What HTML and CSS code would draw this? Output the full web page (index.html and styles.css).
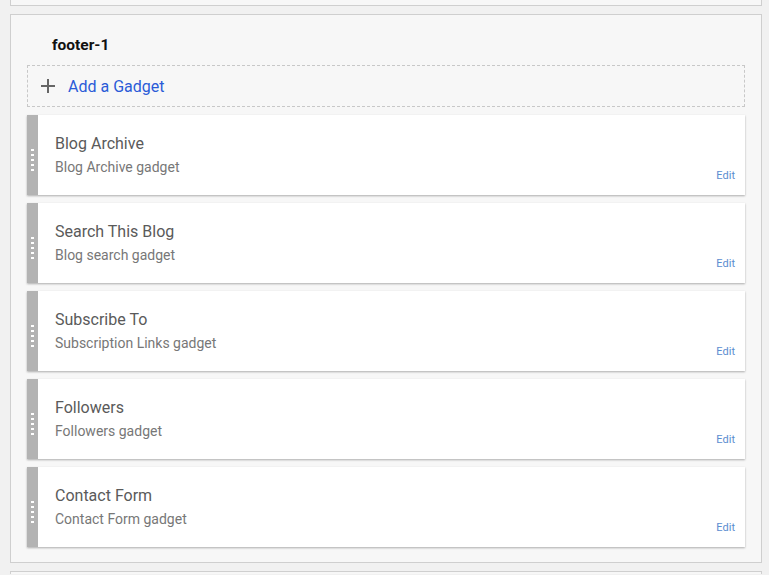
FILE: index.html
```html
<!doctype html>
<html lang="en">

<head>
    <title>Layout</title>
    <link rel="stylesheet" href="styles.css">
</head>

<body>

    <div class="section section-top"></div>

    <div class="section">
        <h3 class="section-title">footer-1</h3>

        <div class="add-gadget">
            <svg class="plus" width="16" height="16" viewBox="0 0 16 16">
                <path d="M8 1v14M1 8h14" stroke="#666" stroke-width="2" fill="none" />
            </svg>
            <span>Add a Gadget</span>
        </div>

        <div class="widget">
            <div class="grip"><span></span><span></span><span></span><span></span><span></span></div>
            <div class="widget-body">
                <div class="widget-title">Blog Archive</div>
                <div class="widget-type">Blog Archive gadget</div>
            </div>
            <a class="edit" href="#">Edit</a>
        </div>

        <div class="widget">
            <div class="grip"><span></span><span></span><span></span><span></span><span></span></div>
            <div class="widget-body">
                <div class="widget-title">Search This Blog</div>
                <div class="widget-type">Blog search gadget</div>
            </div>
            <a class="edit" href="#">Edit</a>
        </div>

        <div class="widget">
            <div class="grip"><span></span><span></span><span></span><span></span><span></span></div>
            <div class="widget-body">
                <div class="widget-title">Subscribe To</div>
                <div class="widget-type">Subscription Links gadget</div>
            </div>
            <a class="edit" href="#">Edit</a>
        </div>

        <div class="widget">
            <div class="grip"><span></span><span></span><span></span><span></span><span></span></div>
            <div class="widget-body">
                <div class="widget-title">Followers</div>
                <div class="widget-type">Followers gadget</div>
            </div>
            <a class="edit" href="#">Edit</a>
        </div>

        <div class="widget">
            <div class="grip"><span></span><span></span><span></span><span></span><span></span></div>
            <div class="widget-body">
                <div class="widget-title">Contact Form</div>
                <div class="widget-type">Contact Form gadget</div>
            </div>
            <a class="edit" href="#">Edit</a>
        </div>
    </div>

    <div class="section section-bottom"></div>

</body>

</html>
```

FILE: styles.css
```css
body {
    font-family: Roboto, Arial, sans-serif;
    margin: 0;
    padding: 0;
    background-color: #f1f1f1;
    overflow: hidden;
}

.section {
    background-color: #f7f7f7;
    border: 1px solid #cfcfcf;
    margin: 0 7px 8px 10px;
    padding: 0 16px 15px 16px;
}

.section-top {
    height: 5px;
    border-top: none;
    padding: 0;
}

.section-bottom {
    height: 2px;
    padding: 0;
    border-bottom: none;
    margin-bottom: 0;
}

.section-title {
    margin: 20px 0 10px 25px;
    font-size: 15.5px;
    line-height: 20px;
    font-weight: bold;
    color: #111;
}

.add-gadget {
    display: flex;
    align-items: center;
    height: 40px;
    border: 1px dashed #c8c8c8;
    padding-left: 12px;
    margin-bottom: 8px;
    color: #2a5bd7;
    font-size: 16px;
}

.plus {
    margin-right: 12px;
}

.widget {
    display: flex;
    height: 80px;
    background-color: white;
    box-shadow: 0px 1px 2px rgba(0, 0, 0, 0.3);
    margin-bottom: 8px;
}

.widget:last-child {
    margin-bottom: 0;
}

.grip {
    width: 11px;
    background-color: #b3b3b3;
    display: flex;
    flex-direction: column;
    justify-content: center;
    align-items: center;
    gap: 3px;
    padding-top: 9px;
}

.grip span {
    display: block;
    width: 3px;
    height: 2px;
    background-color: white;
}

.widget-body {
    flex: 1;
    padding: 19px 0 0 17px;
}

.widget-title {
    font-size: 16px;
    line-height: 20px;
    color: #5a5a5a;
}

.widget-type {
    margin-top: 4px;
    font-size: 14px;
    line-height: 18px;
    color: #777;
}

.edit {
    align-self: flex-end;
    margin: 0 10px 13px 0;
    font-size: 11px;
    line-height: 12px;
    color: #5b8dd0;
    text-decoration: none;
}
```
